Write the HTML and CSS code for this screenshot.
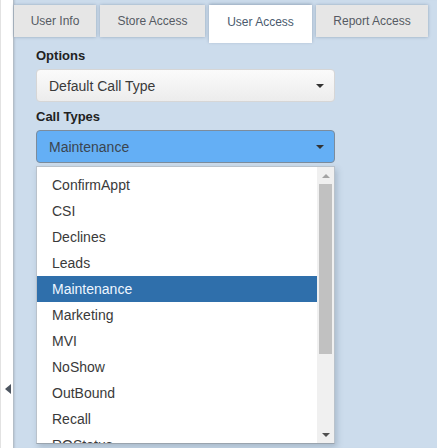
FILE: index.html
```html
<!DOCTYPE html>
<html>
<head>
<meta charset="utf-8">
<link rel="stylesheet" href="styles.css">
</head>
<body>
<div class="page">
  <div class="side">
    <span class="side-arrow"></span>
  </div>
  <div class="main">
    <div class="tabs">
      <div class="tab t1">User Info</div>
      <div class="tab t2">Store Access</div>
      <div class="tab t3 active">User Access</div>
      <div class="tab t4">Report Access</div>
    </div>
    <div class="content">
      <div class="label">Options</div>
      <div class="select plain"><span>Default Call Type</span><span class="caret"></span></div>
      <div class="label">Call Types</div>
      <div class="select open"><span>Maintenance</span><span class="caret"></span></div>
      <div class="list">
        <ul class="items">
          <li>ConfirmAppt</li>
          <li>CSI</li>
          <li>Declines</li>
          <li>Leads</li>
          <li class="sel">Maintenance</li>
          <li>Marketing</li>
          <li>MVI</li>
          <li>NoShow</li>
          <li>OutBound</li>
          <li>Recall</li>
          <li>ROStatus</li>
        </ul>
        <div class="scroll">
          <span class="sb-up"></span>
          <div class="sb-track"><div class="sb-thumb"></div></div>
          <span class="sb-down"></span>
        </div>
      </div>
    </div>
  </div>
</div>
</body>
</html>
```
FILE: styles.css
```css
html, body {
  margin: 0;
  padding: 0;
  background: #ffffff;
}
body {
  width: 437px;
  height: 448px;
  overflow: hidden;
  font-family: "Liberation Sans", Arial, sans-serif;
}
.page {
  display: flex;
  height: 448px;
}
.side {
  width: 13px;
  border-left: 1px solid #e2e2e2;
  background: #ffffff;
  display: flex;
  justify-content: center;
  align-items: flex-start;
  padding-top: 384px;
  box-sizing: border-box;
}
.side-arrow {
  width: 0;
  height: 0;
  border-top: 5px solid transparent;
  border-bottom: 5px solid transparent;
  border-right: 6px solid #4d5560;
  margin-left: 1px;
}
.main {
  flex: 1;
  background: #ccdcec;
  border-left: 1px solid #b4bec8;
  box-shadow: inset 2px 0 2px -1px rgba(0,0,0,0.10);
  display: flex;
  flex-direction: column;
  min-width: 0;
}
.tabs {
  display: flex;
  align-items: flex-start;
  padding-top: 5px;
  height: 37px;
  box-sizing: border-box;
  gap: 4px;
}
.tab {
  height: 32px;
  box-sizing: border-box;
  background: #e6e6e6;
  color: #555a63;
  font-size: 12px;
  display: flex;
  align-items: center;
  justify-content: center;
  box-shadow: 0 0 3px rgba(80,100,125,0.45);
}
.t1 { width: 82px; }
.t2 { width: 105px; }
.t3 { width: 103px; }
.t4 { width: 112px; }
.tab.active {
  background: #ffffff;
  height: 38px;
  color: #4a5a6e;
  padding-bottom: 4px;
  box-shadow: 0 -1px 3px rgba(80,100,125,0.45);
  position: relative;
  z-index: 1;
}
.content {
  padding: 11px 0 0 22px;
  width: 299px;
}
.label {
  font-size: 13px;
  font-weight: bold;
  color: #222;
  height: 15px;
  line-height: 15px;
}
.select {
  margin-top: 6px;
  height: 33px;
  box-sizing: border-box;
  border-radius: 4px;
  display: flex;
  align-items: center;
  justify-content: space-between;
  padding: 0 10px 0 12px;
  font-size: 14px;
  color: #3a3a3a;
}
.select.plain {
  background: linear-gradient(#fbfbfb, #ececec);
  border: 1px solid #d6d6d6;
  margin-bottom: 7px;
}
.select.open {
  background: #64aff5;
  border: 1px solid #7c8c9c;
  color: #3b4550;
}
.caret {
  width: 0;
  height: 0;
  border-left: 4px solid transparent;
  border-right: 4px solid transparent;
  border-top: 4px solid #333;
}
.list {
  margin-top: 3px;
  height: 278px;
  background: #ffffff;
  border: 1px solid #b9c2cb;
  border-bottom-color: #9aa4ae;
  box-sizing: border-box;
  box-shadow: 2px 3px 6px rgba(60,80,100,0.25);
  display: flex;
  overflow: hidden;
}
.items {
  list-style: none;
  margin: 0;
  padding: 5px 0 0 0;
  flex: 1;
  min-width: 0;
}
.items li {
  height: 26px;
  line-height: 26px;
  padding-left: 15px;
  font-size: 14px;
  color: #3a3a3a;
}
.items li.sel {
  background: #2f6fab;
  color: #eef6ff;
}
.scroll {
  width: 17px;
  background: #f0f0f0;
  display: flex;
  flex-direction: column;
  align-items: center;
}
.sb-up {
  margin-top: 7px;
  width: 0;
  height: 0;
  border-left: 4px solid transparent;
  border-right: 4px solid transparent;
  border-bottom: 4px solid #a3a3a3;
  margin-bottom: 6px;
}
.sb-track {
  flex: 1;
  width: 100%;
  display: flex;
  justify-content: center;
}
.sb-thumb {
  width: 13px;
  height: 170px;
  background: #c1c1c1;
}
.sb-down {
  width: 0;
  height: 0;
  border-left: 4px solid transparent;
  border-right: 4px solid transparent;
  border-top: 4px solid #505050;
  margin-bottom: 6px;
}
```
